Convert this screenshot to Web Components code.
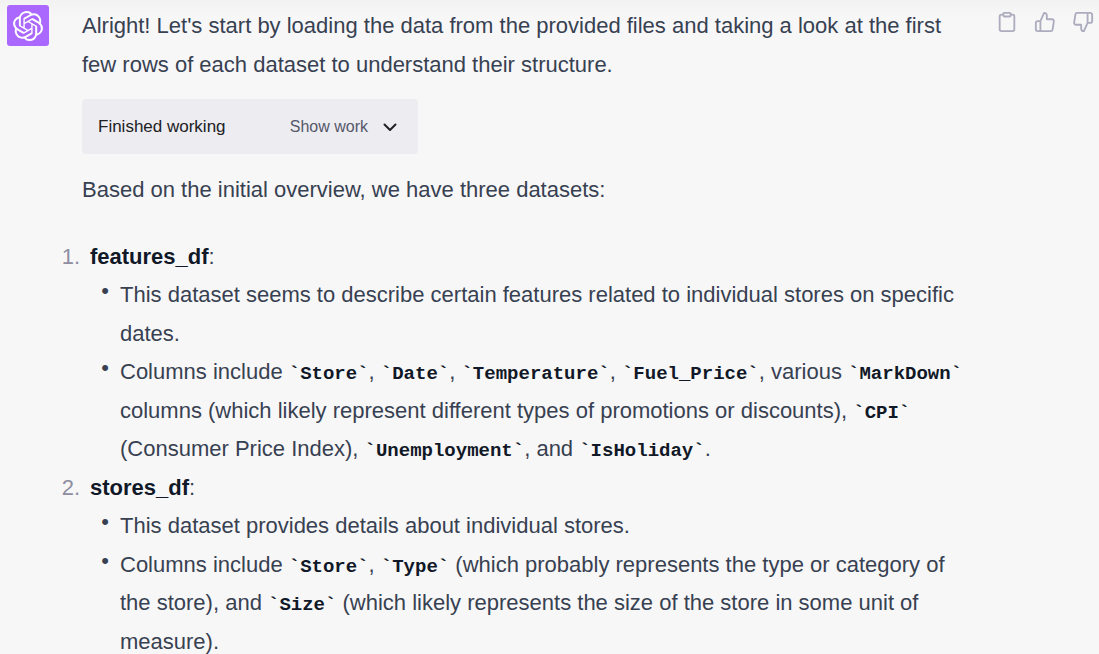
<!DOCTYPE html>
<html lang="en">
<head>
<meta charset="utf-8">
<title>Dataset overview</title>
<style>
  body {
    margin: 0;
    min-height: 100vh;
    background: linear-gradient(#f2f2f3, #f7f7f8 16px);
    color: #374151;
    font: 22px/1.75 "Liberation Sans", Arial, sans-serif;
    overflow: hidden;
  }
</style>
</head>
<body>
<chat-message>
  <chat-avatar slot="avatar"></chat-avatar>
  <message-prose></message-prose>
  <message-actions slot="actions"></message-actions>
</chat-message>

<template id="chat-message">
  <style>
    :host { display: flex; align-items: flex-start; padding: 5px 4px 0 7px; }
    .body { flex: 1; min-width: 0; margin: 2px 24px 0 33px; }
  </style>
  <slot name="avatar"></slot>
  <div class="body"><slot></slot></div>
  <slot name="actions"></slot>
</template>

<template id="chat-avatar">
  <style>
    :host { display: flex; flex: none; align-items: center; justify-content: center; width: 42px; height: 41px; border-radius: 3px; background: #ab68ff; color: #fff; }
  </style>
  <svg width="30" height="30" viewBox="0 0 24 24" fill="currentColor" role="img" aria-label="Assistant"><path d="M22.282 9.821a5.985 5.985 0 0 0-.516-4.91 6.046 6.046 0 0 0-6.51-2.9A6.065 6.065 0 0 0 4.981 4.182a5.985 5.985 0 0 0-3.998 2.9 6.046 6.046 0 0 0 .743 7.097 5.98 5.98 0 0 0 .511 4.911 6.051 6.051 0 0 0 6.515 2.9A5.985 5.985 0 0 0 13.26 24a6.056 6.056 0 0 0 5.772-4.206 5.99 5.99 0 0 0 3.997-2.9 6.056 6.056 0 0 0-.747-7.073zM13.26 22.43a4.476 4.476 0 0 1-2.876-1.04l.141-.081 4.779-2.758a.795.795 0 0 0 .392-.681v-6.737l2.02 1.168a.071.071 0 0 1 .038.052v5.583a4.504 4.504 0 0 1-4.494 4.494zM3.6 18.304a4.47 4.47 0 0 1-.535-3.014l.142.085 4.783 2.759a.771.771 0 0 0 .78 0l5.843-3.369v2.332a.08.08 0 0 1-.033.062L9.74 19.95a4.5 4.5 0 0 1-6.14-1.646zM2.34 7.896a4.485 4.485 0 0 1 2.366-1.973V11.6a.766.766 0 0 0 .388.677l5.815 3.354-2.02 1.168a.076.076 0 0 1-.071 0l-4.83-2.786A4.504 4.504 0 0 1 2.34 7.872zm16.597 3.855l-5.833-3.387L15.119 7.2a.076.076 0 0 1 .071 0l4.83 2.791a4.494 4.494 0 0 1-.676 8.105v-5.678a.79.79 0 0 0-.407-.667zm2.01-3.023l-.141-.085-4.774-2.782a.776.776 0 0 0-.785 0L9.409 9.23V6.897a.066.066 0 0 1 .028-.061l4.83-2.787a4.5 4.5 0 0 1 6.68 4.66zm-12.64 4.135l-2.02-1.164a.08.08 0 0 1-.038-.057V6.075a4.5 4.5 0 0 1 7.375-3.453l-.142.08L8.704 5.46a.795.795 0 0 0-.393.681zm1.097-2.365l2.602-1.5 2.607 1.5v2.999l-2.597 1.5-2.607-1.5z"/></svg>
</template>

<template id="message-actions">
  <style>
    :host { display: flex; flex: none; gap: 16px; padding: 6px 1px 0 0; color: #acacbe; }
    button { display: flex; padding: 0; border: 0; background: none; color: inherit; cursor: pointer; }
    svg { display: block; fill: none; stroke: currentColor; stroke-width: 2; stroke-linecap: round; stroke-linejoin: round; }
  </style>
  <button type="button" aria-label="Copy"><svg width="22" height="22" viewBox="0 0 24 24"><path d="M16 4h2a2 2 0 0 1 2 2v14a2 2 0 0 1-2 2H6a2 2 0 0 1-2-2V6a2 2 0 0 1 2-2h2"/><rect x="8" y="2" width="8" height="4" rx="1"/></svg></button>
  <button type="button" aria-label="Good response"><svg width="22" height="22" viewBox="0 0 24 24"><path d="M14 9V5a3 3 0 0 0-3-3l-4 9v11h11.28a2 2 0 0 0 2-1.7l1.38-9a2 2 0 0 0-2-2.3zM7 22H4a2 2 0 0 1-2-2v-7a2 2 0 0 1 2-2h3"/></svg></button>
  <button type="button" aria-label="Bad response"><svg width="22" height="22" viewBox="0 0 24 24"><path d="M10 15v4a3 3 0 0 0 3 3l4-9V2H5.72a2 2 0 0 0-2 1.7l-1.38 9a2 2 0 0 0 2 2.3zm7-13h2.67A2.31 2.31 0 0 1 22 4v7a2.31 2.31 0 0 1-2.33 2H17"/></svg></button>
</template>

<template id="work-status">
  <style>
    :host { display: flex; align-items: center; justify-content: space-between; box-sizing: border-box; width: 336px; max-width: 100%; padding: 14px 20px 14px 16px; border-radius: 4px; background: #ececf1; color: #202123; font-size: 17px; line-height: 27px; }
    button { display: flex; align-items: center; gap: 14px; padding: 0; border: 0; background: none; color: #565869; font: inherit; font-size: 16px; cursor: pointer; }
    svg { display: block; color: #202123; }
  </style>
  <span><slot></slot></span>
  <button type="button" aria-expanded="false">Show work
    <svg width="16" height="16" viewBox="0 0 16 16" fill="none" stroke="currentColor" stroke-width="2" stroke-linecap="round" stroke-linejoin="round"><path d="M2.500 5.500L8 11l5.500-5.500"/></svg>
  </button>
</template>

<template id="message-prose">
  <style>
    :host { display: block; }
    p { margin: 0; }
    work-status { margin: 15px 0 17px; }
    ol, ul { margin: 0; padding: 0; list-style: none; }
    ol { margin: 28px 0 0 -24px; }
    ol > li { display: grid; grid-template-columns: 22px 1fr; column-gap: 10px; }
    .number { color: #8e8ea0; text-align: right; }
    ul > li { display: grid; grid-template-columns: 30px 1fr; }
    .bullet { line-height: 30px; text-align: center; }
    strong, code { color: #111827; font-weight: 700; }
    code { font-family: "Liberation Mono", monospace; font-size: 19px; line-height: 1; }
  </style>
  <p>Alright! Let's start by loading the data from the provided files and taking a look at the first few rows of each dataset to understand their structure.</p>
  <work-status>Finished working</work-status>
  <p>Based on the initial overview, we have three datasets:</p>
  <ol>
    <li><span class="number">1.</span><div><strong>features_df</strong>:
      <ul>
        <li><span class="bullet">•</span><div>This dataset seems to describe certain features related to individual stores on specific dates.</div></li>
        <li><span class="bullet">•</span><div>Columns include <code>`Store`</code>, <code>`Date`</code>, <code>`Temperature`</code>, <code>`Fuel_Price`</code>, various <code>`MarkDown`</code> columns (which likely represent different types of promotions or discounts), <code>`CPI`</code> (Consumer Price Index), <code>`Unemployment`</code>, and <code>`IsHoliday`</code>.</div></li>
      </ul></div></li>
    <li><span class="number">2.</span><div><strong>stores_df</strong>:
      <ul>
        <li><span class="bullet">•</span><div>This dataset provides details about individual stores.</div></li>
        <li><span class="bullet">•</span><div>Columns include <code>`Store`</code>, <code>`Type`</code> (which probably represents the type or category of the store), and <code>`Size`</code> (which likely represents the size of the store in some unit of measure).</div></li>
      </ul></div></li>
  </ol>
</template>

<script>
  for (const name of ['chat-avatar', 'message-actions', 'work-status', 'message-prose', 'chat-message']) {
    customElements.define(name, class extends HTMLElement {
      constructor() {
        super();
        this.attachShadow({ mode: 'open' }).append(document.getElementById(name).content.cloneNode(true));
      }
    });
  }
</script>
</body>
</html>
